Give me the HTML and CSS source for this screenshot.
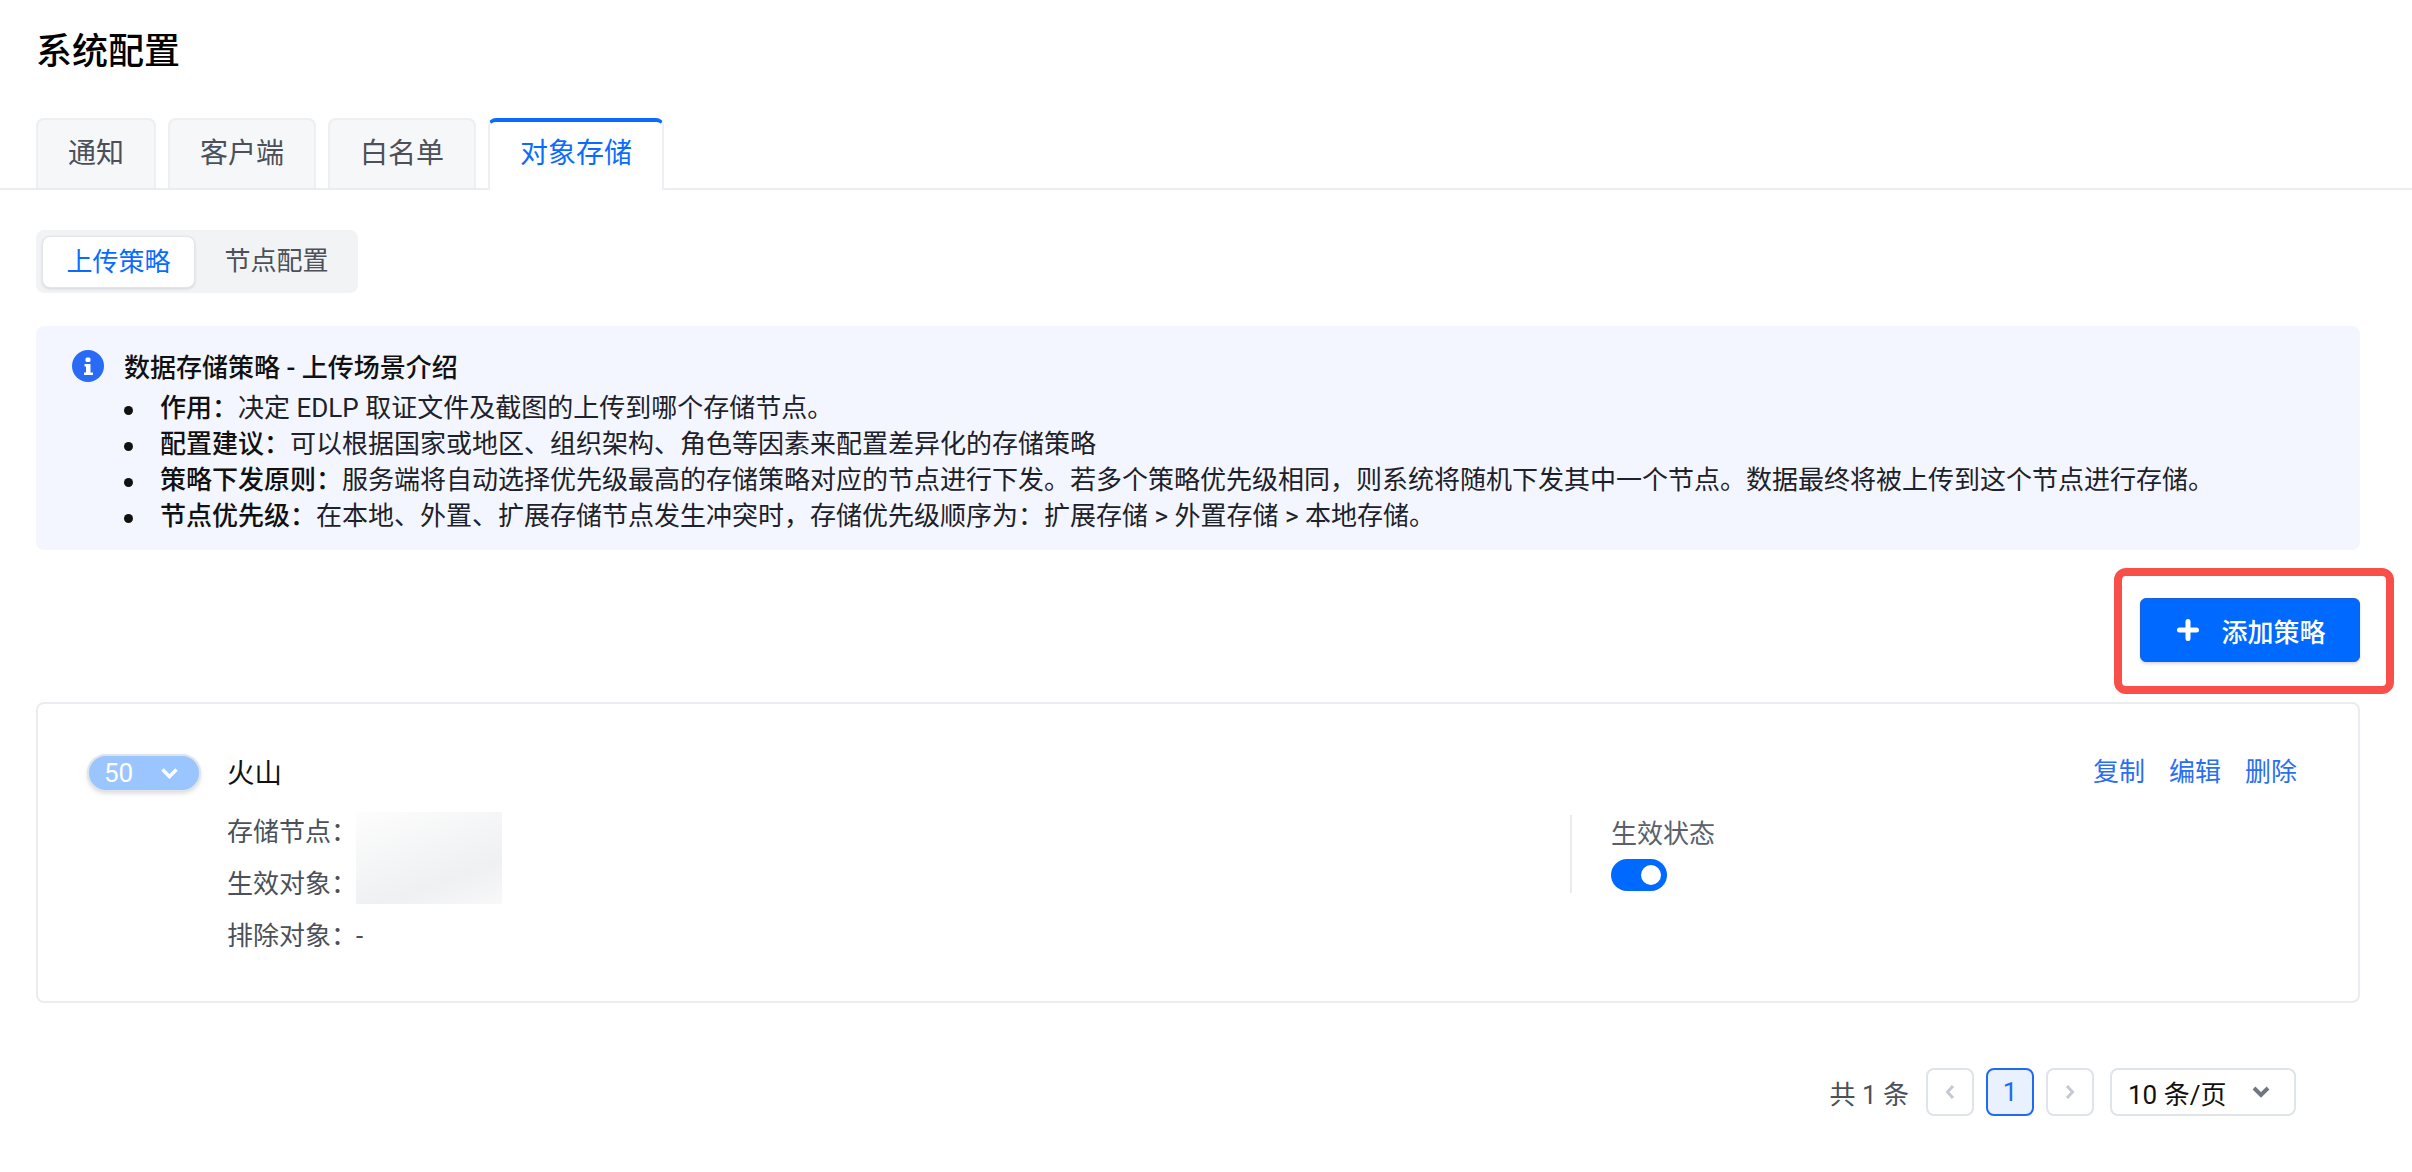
FILE: index.html
```html
<!DOCTYPE html>
<html lang="zh-CN">

<head>
    <meta charset="UTF-8">
    <meta name="viewport" content="width=device-width, initial-scale=1.0">
    <title>系统配置</title>
    <link rel="stylesheet" href="styles.css">
</head>

<body>
    <h1 class="page-title">系统配置</h1>

    <div class="tabs">
        <div class="tab">通知</div>
        <div class="tab">客户端</div>
        <div class="tab">白名单</div>
        <div class="tab tab-active">对象存储</div>
    </div>

    <div class="content">
        <div class="segment">
            <div class="segment-item segment-active">上传策略</div>
            <div class="segment-item">节点配置</div>
        </div>

        <!-- 说明 -->
        <div class="alert">
            <svg class="alert-icon" viewBox="0 0 32 32">
                <circle cx="16" cy="16" r="16" fill="#2a6bf5"/>
                <rect x="13.5" y="7.500" width="5" height="4.500" rx="1.500" fill="#fff"/>
                <path d="M12.500 14h6v8.500h2.500v2.500h-9v-2.500h2v-6h-1.500z" fill="#fff"/>
            </svg>
            <div class="alert-body">
                <div class="alert-title">数据存储策略 - 上传场景介绍</div>
                <ul class="alert-list">
                    <li><b>作用：</b>决定 EDLP 取证文件及截图的上传到哪个存储节点。</li>
                    <li><b>配置建议：</b>可以根据国家或地区、组织架构、角色等因素来配置差异化的存储策略</li>
                    <li><b>策略下发原则：</b>服务端将自动选择优先级最高的存储策略对应的节点进行下发。若多个策略优先级相同，则系统将随机下发其中一个节点。数据最终将被上传到这个节点进行存储。</li>
                    <li><b>节点优先级：</b>在本地、外置、扩展存储节点发生冲突时，存储优先级顺序为：扩展存储 &gt; 外置存储 &gt; 本地存储。</li>
                </ul>
            </div>
        </div>

        <div class="toolbar">
            <div class="add-wrap">
                <button class="add-btn">
                    <svg class="add-icon" viewBox="0 0 22 22"><path d="M11 2.500v17M2.500 11h17" stroke="#fff" stroke-width="5" stroke-linecap="round"/></svg>
                    添加策略
                </button>
                <div class="highlight"></div>
            </div>
        </div>

        <!-- 策略卡片 -->
        <div class="card">
            <div class="priority">
                <span>50</span>
                <svg class="priority-arrow" viewBox="0 0 19 12"><path d="M2.500 2.500L9.500 9.500l7-7" fill="none" stroke="#fff" stroke-width="3.500"/></svg>
            </div>
            <div class="card-main">
                <div class="card-head">
                    <div class="card-name">火山</div>
                    <div class="card-ops">
                        <a>复制</a>
                        <a>编辑</a>
                        <a>删除</a>
                    </div>
                </div>
                <div class="card-detail">
                    <div class="fields">
                        <div class="field-label">存储节点：</div>
                        <div class="field-blur"></div>
                        <div class="field-label">生效对象：</div>
                        <div class="field-label">排除对象：</div>
                        <div class="field-value">-</div>
                    </div>
                    <div class="status">
                        <div class="status-label">生效状态</div>
                        <div class="switch"><div class="switch-knob"></div></div>
                    </div>
                </div>
            </div>
        </div>

        <div class="pager">
            <span class="pager-total">共 1 条</span>
            <div class="pager-btn">
                <svg class="pager-arrow" viewBox="0 0 10 16"><path d="M8 2L2.500 8 8 14" fill="none" stroke="#c5c9d3" stroke-width="3"/></svg>
            </div>
            <div class="pager-btn pager-current">1</div>
            <div class="pager-btn">
                <svg class="pager-arrow" viewBox="0 0 10 16"><path d="M2 2l5.500 6L2 14" fill="none" stroke="#c5c9d3" stroke-width="3"/></svg>
            </div>
            <div class="pager-size">
                <span>10 条/页</span>
                <svg class="pager-size-arrow" viewBox="0 0 18 12"><path d="M2 2l7 7 7-7" fill="none" stroke="#6f7684" stroke-width="4"/></svg>
            </div>
        </div>
    </div>
</body>

</html>
```

FILE: styles.css
```css
body {
    margin: 0;
    background-color: #FFFFFF;
    font-family: "Roboto", "Noto Sans CJK SC", sans-serif;
    color: #111111;
}

.page-title {
    margin: 31px 36px 45px;
    font-size: 36px;
    line-height: 42px;
    font-weight: 500;
    color: #000000;
}

.tabs {
    display: flex;
    gap: 12px;
    height: 70px;
    padding-left: 36px;
    border-bottom: 2px solid #ebecf1;
}

.tab {
    box-sizing: border-box;
    height: 70px;
    padding: 0 30px;
    font-size: 28px;
    line-height: 68px;
    color: #4b5059;
    background-color: #f6f7f9;
    border: 2px solid #eeeff3;
    border-bottom: none;
    border-radius: 8px 8px 0 0;
}

.tab-active {
    height: 72px;
    line-height: 64px;
    color: #0a6cff;
    background-color: #FFFFFF;
    border-top: 4px solid #0a6cff;
}

.content {
    padding: 0 52px 0 36px;
}

.segment {
    display: inline-flex;
    gap: 4px;
    box-sizing: border-box;
    height: 63px;
    margin-top: 40px;
    padding: 6px 4px 6px 6px;
    background-color: #f2f3f5;
    border-radius: 8px;
    vertical-align: top;
}

.segment-item {
    box-sizing: border-box;
    width: 155px;
    height: 52px;
    font-size: 26px;
    line-height: 50px;
    text-align: center;
    color: #4b5059;
}

.segment-active {
    width: 153px;
    color: #0a6cff;
    background-color: #FFFFFF;
    border: 1px solid #e4e5ea;
    border-radius: 8px;
    box-shadow: 0 1px 3px rgba(0, 0, 0, 0.12);
}

.alert {
    display: flex;
    gap: 20px;
    box-sizing: border-box;
    height: 224px;
    margin-top: 33px;
    padding: 24px 36px;
    background-color: #f3f6fe;
    border-radius: 8px;
}

.alert-icon {
    flex: none;
    width: 32px;
    height: 32px;
}

.alert-title {
    margin-bottom: 4px;
    font-size: 26px;
    line-height: 36px;
    font-weight: 500;
}

.alert-list {
    margin: 0;
    padding-left: 36px;
    list-style: none;
    font-size: 26px;
    line-height: 36px;
    color: #1d2129;
}

.alert-list li::before {
    content: "";
    display: inline-block;
    width: 9px;
    height: 9px;
    margin-left: -36px;
    margin-right: 27px;
    background-color: #111111;
    border-radius: 50%;
    vertical-align: middle;
}

.alert-list b {
    font-weight: 500;
    color: #111111;
}

.toolbar {
    display: flex;
    justify-content: flex-end;
    margin-top: 48px;
}

.add-wrap {
    position: relative;
}

.add-btn {
    display: flex;
    align-items: center;
    justify-content: center;
    gap: 22px;
    width: 220px;
    height: 64px;
    padding: 0 0 0 3px;
    font-family: inherit;
    font-size: 26px;
    font-weight: 500;
    color: #FFFFFF;
    background-color: #0069ff;
    border: 1px solid #1a5fdc;
    border-radius: 6px;
    box-shadow: 0 2px 3px rgba(0, 0, 0, 0.15);
}

.add-icon {
    width: 22px;
    height: 22px;
}

.highlight {
    position: absolute;
    top: -30px;
    left: -26px;
    right: -34px;
    bottom: -32px;
    border: 8px solid #f94f4a;
    border-radius: 12px;
}

.card {
    display: flex;
    gap: 27px;
    box-sizing: border-box;
    height: 301px;
    margin-top: 40px;
    padding: 50px 61px 0 49px;
    border: 2px solid #ebecf1;
    border-radius: 8px;
}

.priority {
    display: flex;
    align-items: center;
    justify-content: space-between;
    flex: none;
    box-sizing: border-box;
    width: 114px;
    height: 38px;
    margin-right: -1px;
    padding: 0 20px 0 15px;
    font-size: 26px;
    color: #FFFFFF;
    background-color: #9ac5fe;
    border: 2px solid #dfe3ea;
    border-radius: 19px;
    box-shadow: 0 2px 4px rgba(0, 0, 0, 0.12);
}

.priority-arrow {
    width: 19px;
    height: 12px;
}

.card-main {
    flex: 1;
}

.card-head {
    display: flex;
    justify-content: space-between;
    margin-bottom: 12px;
}

.card-name {
    font-size: 27.5px;
    line-height: 40px;
    color: #111111;
}

.card-ops {
    display: flex;
    gap: 24px;
    margin-top: -2px;
    font-size: 26px;
    line-height: 40px;
    color: #2a6ff0;
}

.card-detail {
    display: flex;
}

.fields {
    display: grid;
    grid-template-columns: 129px 146px;
    grid-auto-rows: 52px;
    width: 1343px;
    font-size: 26px;
    line-height: 52px;
    color: #4b5059;
}

.field-label {
    white-space: nowrap;
}

.field-blur {
    grid-row: span 2;
    align-self: center;
    height: 92px;
    background: linear-gradient(160deg, #fdfdfd, #eff0f2 70%, #f8f8f9);
}

.status {
    box-sizing: border-box;
    height: 78px;
    margin-top: 9px;
    padding-left: 39px;
    border-left: 2px solid #e9eaef;
}

.status-label {
    height: 44px;
    font-size: 26px;
    line-height: 38px;
    color: #5a606b;
}

.switch {
    display: flex;
    align-items: center;
    justify-content: flex-end;
    box-sizing: border-box;
    width: 56px;
    height: 32px;
    padding-right: 6px;
    background-color: #0069ff;
    border-radius: 16px;
}

.switch-knob {
    width: 20px;
    height: 20px;
    background-color: #FFFFFF;
    border-radius: 50%;
}

.pager {
    display: flex;
    align-items: center;
    justify-content: flex-end;
    margin-top: 65px;
    padding-right: 64px;
    font-size: 26px;
    color: #4b5059;
}

.pager-total {
    margin-right: 17px;
}

.pager-btn {
    display: flex;
    align-items: center;
    justify-content: center;
    box-sizing: border-box;
    width: 48px;
    height: 48px;
    margin-right: 12px;
    border: 2px solid #dfe3ea;
    border-radius: 8px;
}

.pager-current {
    color: #1f6af5;
    background-color: #e9f0fe;
    border-color: #1f6af5;
}

.pager-arrow {
    width: 10px;
    height: 16px;
}

.pager-size {
    display: flex;
    align-items: center;
    justify-content: space-between;
    box-sizing: border-box;
    width: 186px;
    height: 48px;
    margin-left: 4px;
    padding: 0 24px 0 16px;
    color: #111111;
    border: 2px solid #dfe3ea;
    border-radius: 8px;
}

.pager-size-arrow {
    width: 18px;
    height: 12px;
}
```
